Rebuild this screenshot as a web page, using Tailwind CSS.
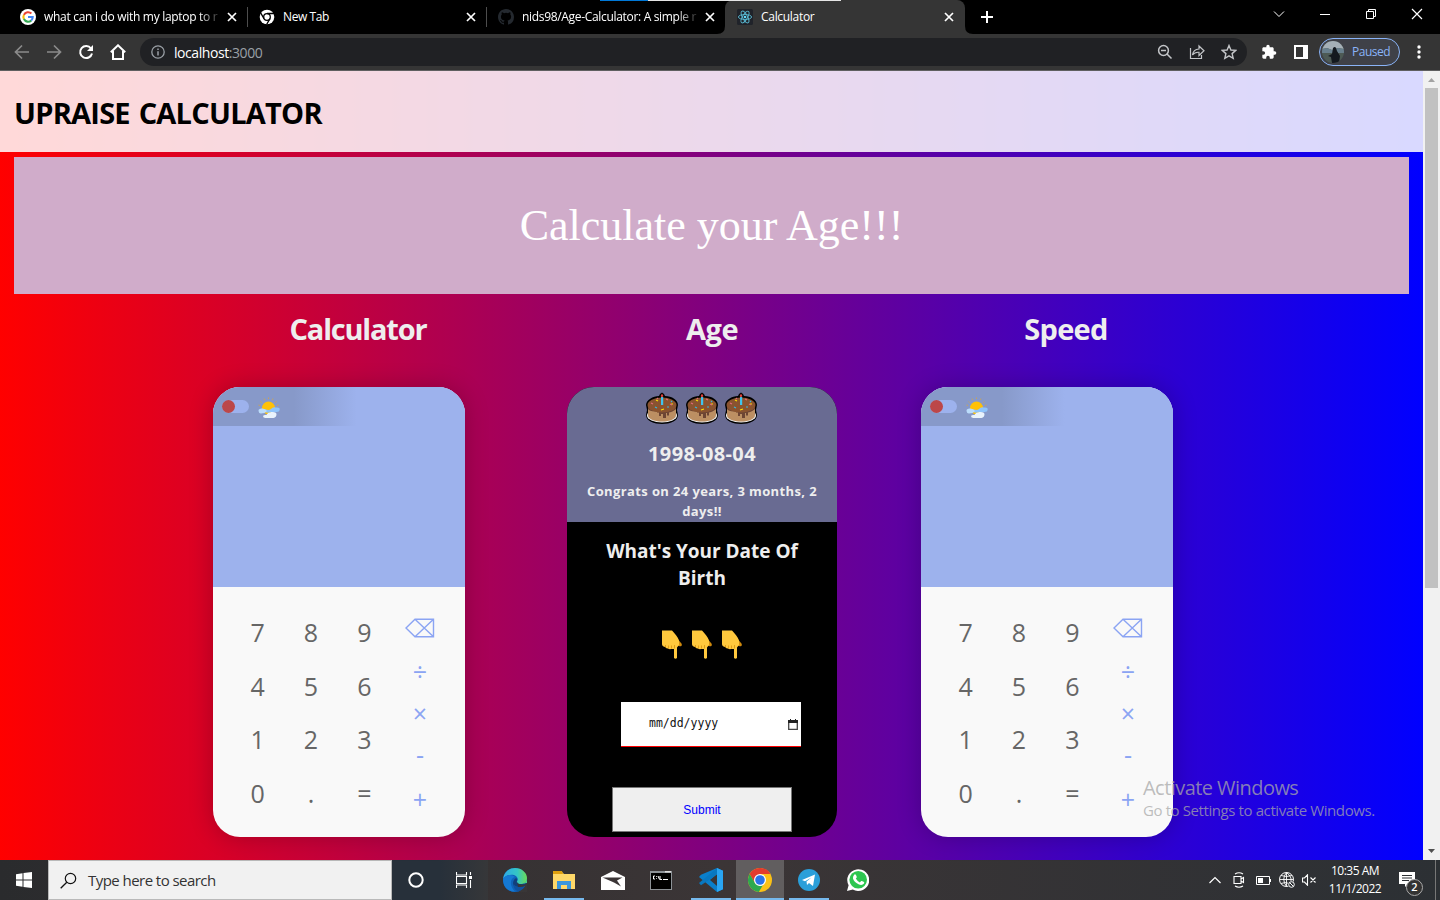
<!DOCTYPE html>
<html lang="en">
<head>
<meta charset="utf-8">
<title>Calculator</title>
<script src="https://cdn.jsdelivr.net/npm/@tailwindcss/browser@4"></script>
</head>
<body class="w-[1440px] h-[900px] overflow-hidden bg-black font-['Open_Sans','Noto_Sans',sans-serif]">
<svg class="hidden" xmlns="http://www.w3.org/2000/svg">
  <symbol id="x" viewBox="0 0 10 10"><path d="M1 1l8 8M9 1l-8 8" stroke="#fff" stroke-width="1.7" fill="none"/></symbol>
  <symbol id="cake" viewBox="0 0 34 34">
    <path d="M1 13C1 8 8 4 14 4L15 2L17 .5L19 2L20 4C27 4 33 8 33 13L32 18L33 23C33 29 25 32 17 32S1 29 1 23L2 18Z" fill="#000"/>
    <ellipse cx="17" cy="23.500" rx="15" ry="7" fill="#ececec"/>
    <path d="M3 13h28v10c0 4-6 6.500-14 6.500S3 27 3 23z" fill="#bc8f63"/>
    <path d="M3 13h28v4c-2 2-4 3-7 3.500v3h-2v-2.500h-1v5h-3v-4h-2v2h-2v-3.500h-2v-1C7 20 4 18.500 3 17z" fill="#6d4534"/>
    <ellipse cx="17" cy="13" rx="14.500" ry="7.500" fill="#8a532f"/>
    <path d="M16 5h2.200v8H16z" fill="#3fc5ee"/><path d="M17 1.500l1.400 2.500-1.400 1.500L15.600 4z" fill="#e8453c"/>
    <path d="M11 8l2 1M19 17l-3 1M26 12h2" stroke="#fce100" stroke-width="1.200"/><path d="M10 15l2 1M22 15h2M26 9l1 1" stroke="#35b9de" stroke-width="1.200"/><path d="M6 11l2 1M21 7l2 1M27 13l-2-1M12 7l1-1" stroke="#e26a7d" stroke-width="1.200"/>
  </symbol>
  <symbol id="hand" viewBox="0 0 20 29">
    <path d="M10 2l9 11c2 2 0 4-2 3l-4-1z" fill="#d08a0c"/>
    <path d="M0 0.500h10c3 3 6 7 7 10v4.500l-2 2.500v10.500q-1.500 1.500-3 0v-9H9q-1.500 .5-3-.500-2 0-2.500-1.500Q0 16.500 0 14z" fill="#ffc83d"/>
    <path d="M3.500 15v2.500M6.500 15.500v3M9.500 15.500v3M12.500 15v3.500" stroke="#d8930f" stroke-width=".8"/>
  </symbol>
  <symbol id="sun" viewBox="0 0 22 22">
    <circle cx="10.500" cy="11" r="6.500" fill="#ffc107"/>
    <path d="M10.500 .500v1.500M6 1.500l.6 1.400M15 1.500l-.6 1.400M2.500 4.500L3.600 5.600M18.500 4.500L17.400 5.600M.500 8l1.500.6M20.500 8l-1.500.6" stroke="#d9a640" stroke-width=".8"/>
    <path d="M4 14q0-2.500 4-1.500 3 1 5-.500 2-2.500 5-1.500 4-.5 3.700 2-.3 2.500-3.200 2.500h-5q-4 2-9.500-1z" fill="#8fc4fb"/>
    <path d="M0.500 13q1-2 4-1.500 3 0 4.500 2.500-2 2.500-6 2.500-2.500 0-2.500-3.500z" fill="#bbdcfb"/>
    <path d="M5 19q1-1.500 3.500-1 1-2.500 5-3 4.500-.5 5 2 0 3.500-3 4H7.500q-2.500 0-2.500-2z" fill="#e9f3fd"/>
  </symbol>
  <symbol id="backspace" viewBox="0 0 30 20"><path d="M1 10L10 1.200H28.500V18.800H10ZM10 1.200L28.500 18.800M28.500 1.200L10 18.800" fill="none" stroke="#8ba4f3" stroke-width="1.400"/></symbol>
</svg>

<div class="flex h-[900px] flex-col">
  <!-- Tab strip -->
  <div class="relative flex h-[34px] shrink-0 bg-black pl-2 text-[12px] text-white">
    <div class="flex w-[239px] items-center pl-3">
      <svg class="size-4 shrink-0" viewBox="0 0 16 16"><circle cx="8" cy="8" r="8" fill="#fff"/><g fill="none" stroke-width="2.100"><path d="M3.900 5.900A4.700 4.700 0 0 1 11.400 4.600" stroke="#ea4335"/><path d="M3.900 10.100a4.700 4.700 0 0 1 0-4.200" stroke="#fbbc05"/><path d="M11.300 11.400a4.700 4.700 0 0 1-7.400-1.300" stroke="#34a853"/><path d="M8 8h4.700a4.700 4.700 0 0 1-1.500 3.500" stroke="#4285f4"/></g></svg>
      <span class="ml-2 w-[176px] shrink-0 whitespace-nowrap tracking-[-0.3px] [mask-image:linear-gradient(to_right,black_155px,transparent_178px)]">what can i do with my laptop to r</span>
      <svg class="ml-[7px] size-[10px] shrink-0"><use href="#x"/></svg>
      <span class="-mr-px ml-[10px] h-5 w-px bg-[#4d4d4d]"></span>
    </div>
    <div class="flex w-[239px] items-center pl-3">
      <svg class="size-4 shrink-0" viewBox="0 0 16 16"><circle cx="8" cy="8" r="7.300" fill="#fff"/><circle cx="8" cy="8" r="3.300" fill="#fff" stroke="#000" stroke-width="1.300"/><path d="M8 4.500h7M5 9.700L1.500 3.700M11 9.700L7.600 15.500" stroke="#000" stroke-width="1.300"/></svg>
      <span class="ml-2 w-[176px] shrink-0 tracking-[-0.4px]">New Tab</span>
      <svg class="ml-[7px] size-[10px] shrink-0"><use href="#x"/></svg>
      <span class="-mr-px ml-[10px] h-5 w-px bg-[#4d4d4d]"></span>
    </div>
    <div class="flex w-[239px] items-center pl-3">
      <svg class="size-4 shrink-0" viewBox="0 0 16 16"><path fill="#24292f" d="M8 0C3.580 0 0 3.580 0 8c0 3.540 2.290 6.530 5.470 7.590.4.070.550-.170.550-.380v-1.490c-2.010.370-2.530-.490-2.690-.940-.090-.230-.480-.940-.820-1.130-.280-.150-.680-.520-.010-.530.630-.010 1.080.580 1.230.820.720 1.210 1.870.870 2.330.660.070-.520.280-.870.510-1.070-1.780-.200-3.640-.890-3.640-3.950 0-.870.310-1.590.820-2.150-.080-.200-.360-1.020.080-2.120 0 0 .670-.210 2.200.820a7.600 7.600 0 0 1 4 0c1.530-1.040 2.200-.820 2.200-.820.440 1.100.160 1.920.080 2.120.510.560.820 1.270.820 2.150 0 3.070-1.870 3.750-3.650 3.950.290.250.540.730.540 1.480v2.200c0 .210.150.460.550.380A8 8 0 0 0 16 8c0-4.420-3.580-8-8-8z"/></svg>
      <span class="ml-2 w-[176px] shrink-0 whitespace-nowrap tracking-[-0.32px] [mask-image:linear-gradient(to_right,black_155px,transparent_178px)]">nids98/Age-Calculator: A simple r</span>
      <svg class="ml-[7px] size-[10px] shrink-0"><use href="#x"/></svg>
    </div>
    <div class="flex w-[240px] items-center rounded-t-lg bg-[#353535] pl-3">
      <svg class="size-4 shrink-0" viewBox="0 0 16 16"><rect width="16" height="16" rx="1.500" fill="#20232a"/><g fill="none" stroke="#58b8d0" stroke-width=".9"><ellipse cx="8" cy="8" rx="6.600" ry="2.500"/><ellipse cx="8" cy="8" rx="6.600" ry="2.500" transform="rotate(60 8 8)"/><ellipse cx="8" cy="8" rx="6.600" ry="2.500" transform="rotate(120 8 8)"/></g><circle cx="8" cy="8" r="1.300" fill="#61dafb"/></svg>
      <span class="ml-2 w-[176px] shrink-0 tracking-[-0.3px]">Calculator</span>
      <svg class="ml-[7px] size-[10px] shrink-0"><use href="#x"/></svg>
    </div>
    <svg class="ml-[16px] mt-[11px] size-3" viewBox="0 0 12 12"><path d="M6 0v12M0 6h12" stroke="#fff" stroke-width="2"/></svg>
    <svg class="absolute left-[717px] bottom-0 h-2 w-[256px]" viewBox="0 0 256 8"><path d="M0 8Q8 8 8 0V8ZM256 8Q248 8 248 0V8Z" fill="#353535"/></svg>
    <div class="absolute left-[600px] top-0 flex h-px w-[241px] bg-[#e6e6e6]"><span class="w-12 bg-[#0078d7]"></span></div>
    <div class="ml-auto mr-[17px] mt-[8px] flex gap-[34px]">
      <svg class="size-3" viewBox="0 0 12 12"><path d="M1 3.500L6 8.500L11 3.500" fill="none" stroke="#fff"/></svg>
      <svg class="size-3" viewBox="0 0 12 12"><path d="M1 6.500h10" stroke="#fff"/></svg>
      <svg class="size-3" viewBox="0 0 12 12"><path d="M1.500 3.500h7v7h-7zM3.500 3.500v-2h7v7h-2" fill="none" stroke="#fff"/></svg>
      <svg class="size-3" viewBox="0 0 12 12"><path d="M1 1l10 10M11 1L1 11" stroke="#fff" stroke-width="1.200"/></svg>
    </div>
  </div>

  <!-- Toolbar -->
  <div class="flex h-[37px] shrink-0 items-center border-b border-[#5f5f60] bg-[#353535] pl-[14px]">
    <div class="flex gap-4">
      <svg class="size-4" viewBox="0 0 16 16"><path d="M15 8H2M8 1.500L1.500 8L8 14.500" fill="none" stroke="#8b8b8b" stroke-width="1.700"/></svg>
      <svg class="size-4" viewBox="0 0 16 16"><path d="M1 8h13M8 1.500L14.500 8L8 14.500" fill="none" stroke="#8b8b8b" stroke-width="1.700"/></svg>
      <svg class="size-4" viewBox="0 0 16 16"><path d="M13 4.500A6 6 0 1 0 14 9.500" fill="none" stroke="#fff" stroke-width="2"/><path d="M15 1v6H9z" fill="#fff"/></svg>
      <svg class="size-4" viewBox="0 0 16 16"><path d="M.800 8.200L8 1.300L15.200 8.200M3 7v8h10V7" fill="none" stroke="#fff" stroke-width="2"/></svg>
    </div>
    <div class="ml-[14px] flex h-7 w-[1107px] items-center rounded-full bg-[#202124] pl-[11px] pr-[10px]">
      <svg class="size-[14px]" viewBox="0 0 14 14"><circle cx="7" cy="7" r="6.200" fill="none" stroke="#9aa0a6" stroke-width="1.300"/><path d="M7 6.200v4.300M7 3.500v1.500" stroke="#9aa0a6" stroke-width="1.500"/></svg>
      <span class="ml-[9px] text-[14px] tracking-[-0.43px] text-white">localhost<span class="text-[#9aa0a6]">:3000</span></span>
      <div class="ml-auto flex items-center gap-4">
        <svg class="size-4" viewBox="0 0 16 16"><circle cx="6.500" cy="6.500" r="4.900" fill="none" stroke="#c3c5c8" stroke-width="1.500"/><path d="M4 6.500h5M10 10l4.500 4.500" stroke="#c3c5c8" stroke-width="1.500"/></svg>
        <svg class="size-4" viewBox="0 0 16 16"><path d="M1.500 4v10.500h11V11M3.500 11C4 7.500 6.500 5.200 10 5V2l5 4.800L10 11.500V8.300C7 8 5 9 3.500 11z" fill="none" stroke="#c3c5c8" stroke-width="1.200"/></svg>
        <svg class="size-4" viewBox="0 0 16 16"><path d="M8 1.500l1.900 4.500 4.900.4-3.700 3.200 1.100 4.800L8 11.900l-4.200 2.500 1.100-4.800L1.200 6.400l4.900-.4z" fill="none" stroke="#c3c5c8" stroke-width="1.400"/></svg>
      </div>
    </div>
    <svg class="ml-[14px] size-4" viewBox="0 0 24 24"><path fill="#fff" d="M20.500 11H19V7c0-1.100-.9-2-2-2h-4V3.500a2.500 2.500 0 0 0-5 0V5H4c-1.100 0-2 .9-2 2v3.800h1.500a2.700 2.700 0 0 1 0 5.400H2V20c0 1.100.9 2 2 2h3.800v-1.500a2.700 2.700 0 0 1 5.400 0V22H17c1.100 0 2-.9 2-2v-4h1.500a2.500 2.500 0 0 0 0-5z"/></svg>
    <svg class="ml-[17px] size-[14px]" viewBox="0 0 14 14"><path d="M0 0h14v14H0zM2 2v10h7V2z" fill="#fff" fill-rule="evenodd"/></svg>
    <div class="ml-[11px] flex h-7 w-[81px] items-center rounded-full border border-[#8ab4f8] bg-[#3f4148] pl-0.5">
      <svg class="size-[22px] shrink-0" viewBox="0 0 22 22"><defs><clipPath id="av"><circle cx="11" cy="11" r="11"/></clipPath></defs><g clip-path="url(#av)"><path d="M0 0h22v22H0z" fill="#4d5a55"/><path d="M0 0h22v8l-6-1-6 2-5-2-5 1z" fill="#a5b0b7"/><path d="M0 8l5-1 5 2 6-2 6 1v4H0z" fill="#687f8d"/><path d="M11 7q2-2 3 0l1 3 3 5-1 7h-7l-1-6-3-1 4-2z" fill="#14191f"/></g></svg>
      <span class="ml-2 text-[12px] tracking-[-0.5px] text-[#8ab4f8]">Paused</span>
    </div>
    <svg class="ml-[17px] h-[14px] w-1" viewBox="0 0 4 14" fill="#fff"><circle cx="2" cy="2" r="1.700"/><circle cx="2" cy="7" r="1.700"/><circle cx="2" cy="12" r="1.700"/></svg>
  </div>

  <!-- Page -->
  <div class="relative flex h-[789px] shrink-0">
    <main class="w-[1423px] bg-linear-to-r/srgb from-[#f00] to-[#00f]">
      <header class="flex h-[81px] items-center bg-white/85 pl-[14px]"><h1 class="mt-[3px] text-[29px] font-bold tracking-[-0.75px] [word-spacing:2px] text-black">UPRAISE CALCULATOR</h1></header>
      <div class="mx-[14px] mt-[5px] flex h-[137px] items-center justify-center bg-[#d0acca] font-['Liberation_Serif',serif] text-[44px] text-white">Calculate your Age!!!</div>
      <div class="ml-[181px] grid w-[1062px] grid-cols-3">
        <section>
          <h2 class="mt-[14px] h-[43px] text-center text-[29px] font-bold leading-[42px] tracking-[-1.2px] text-[#eee]">Calculator</h2>
          <div class="ml-8 mt-9 h-[450px] w-[252px] overflow-hidden rounded-[27px] bg-[#f9f9f9] shadow-[0_0_25px_rgba(0,0,0,0.22)]">
            <div class="h-[200px] bg-[#9db2ed]">
              <div class="flex h-[39px] items-center bg-linear-to-r/srgb from-[#8799c9] from-32% to-[#9db2ed] to-57% pl-[9px]">
                <span class="flex h-[13px] w-[27px] rounded-full bg-[#9db2ed]"><i class="size-[13px] rounded-full bg-[#bc4749]"></i></span>
                <svg class="ml-[9px] mt-0.5 size-[22px]"><use href="#sun"/></svg>
              </div>
            </div>
            <div class="flex pl-[18px] pt-[19px] text-[25px] text-[#666]">
              <div class="grid w-[160px] grid-cols-3 auto-rows-[53.500px] place-items-center"><b class="font-normal">7</b><b class="font-normal">8</b><b class="font-normal">9</b><b class="font-normal">4</b><b class="font-normal">5</b><b class="font-normal">6</b><b class="font-normal">1</b><b class="font-normal">2</b><b class="font-normal">3</b><b class="font-normal">0</b><b class="font-normal">.</b><b class="font-normal">=</b></div>
              <div class="flex w-[58px] flex-col items-center pt-3 leading-[43px] text-[#8ba4f3]"><svg class="mb-[12px] h-5 w-[30px]"><use href="#backspace"/></svg><span class="h-[42px]">÷</span><span class="h-[41px]">×</span><span class="h-[45px]">-</span><span>+</span></div>
            </div>
          </div>
        </section>
        <section>
          <h2 class="mt-[14px] h-[43px] text-center text-[29px] font-bold leading-[42px] tracking-[-0.5px] text-[#eee]">Age</h2>
          <div class="ml-8 mt-9 flex h-[450px] w-[270px] flex-col items-center overflow-hidden rounded-[27px] bg-black text-center font-bold text-[#eee]">
            <div class="h-[135px] w-full shrink-0 bg-[#696b92]">
              <div class="flex justify-center gap-[5.500px] pt-[5px] pr-px"><svg class="size-[34px]"><use href="#cake"/></svg><svg class="size-[34px]"><use href="#cake"/></svg><svg class="size-[34px]"><use href="#cake"/></svg></div>
              <p class="mt-[14px] text-[20px] leading-[28px] tracking-[0.35px]">1998-08-04</p>
              <p class="mt-[13px] text-[13px] leading-5 tracking-[0.38px]">Congrats on 24 years, 3 months, 2<br>days!!</p>
            </div>
            <p class="mt-[16px] text-[19px] leading-[27px] tracking-[-0.02px]">What's Your Date Of<br>Birth</p>
            <div class="mt-[38px] flex gap-[10px]"><svg class="h-[29px] w-5"><use href="#hand"/></svg><svg class="h-[29px] w-5"><use href="#hand"/></svg><svg class="h-[29px] w-5"><use href="#hand"/></svg></div>
            <div class="ml-[18px] mt-[43px] flex h-[45px] w-[180px] shrink-0 items-center border-b border-[#f00] bg-white pl-7 pr-[3px] font-['DejaVu_Sans_Mono',monospace] text-[11.500px] font-normal text-[#111]">mm/dd/yyyy<svg class="ml-auto h-[11px] w-[10px]" viewBox="0 0 10 11"><path d="M.700 2h8.600v8.300H.700z" fill="none" stroke="#444" stroke-width="1.300"/><path d="M0 1h10v3H0zM2 0h1v2H2zM7 0h1v2H7z" fill="#222"/></svg></div>
            <button class="mt-10 h-[45px] w-[180px] shrink-0 border border-[#767676] bg-[#efefef] font-['Liberation_Sans',sans-serif] text-[12px] font-normal text-[#00f]">Submit</button>
          </div>
        </section>
        <section>
          <h2 class="mt-[14px] h-[43px] text-center text-[29px] font-bold leading-[42px] tracking-[-0.7px] text-[#eee]">Speed</h2>
          <div class="ml-8 mt-9 h-[450px] w-[252px] overflow-hidden rounded-[27px] bg-[#f9f9f9] shadow-[0_0_25px_rgba(0,0,0,0.22)]">
            <div class="h-[200px] bg-[#9db2ed]">
              <div class="flex h-[39px] items-center bg-linear-to-r/srgb from-[#8799c9] from-32% to-[#9db2ed] to-57% pl-[9px]">
                <span class="flex h-[13px] w-[27px] rounded-full bg-[#9db2ed]"><i class="size-[13px] rounded-full bg-[#bc4749]"></i></span>
                <svg class="ml-[9px] mt-0.5 size-[22px]"><use href="#sun"/></svg>
              </div>
            </div>
            <div class="flex pl-[18px] pt-[19px] text-[25px] text-[#666]">
              <div class="grid w-[160px] grid-cols-3 auto-rows-[53.500px] place-items-center"><b class="font-normal">7</b><b class="font-normal">8</b><b class="font-normal">9</b><b class="font-normal">4</b><b class="font-normal">5</b><b class="font-normal">6</b><b class="font-normal">1</b><b class="font-normal">2</b><b class="font-normal">3</b><b class="font-normal">0</b><b class="font-normal">.</b><b class="font-normal">=</b></div>
              <div class="flex w-[58px] flex-col items-center pt-3 leading-[43px] text-[#8ba4f3]"><svg class="mb-[12px] h-5 w-[30px]"><use href="#backspace"/></svg><span class="h-[42px]">÷</span><span class="h-[41px]">×</span><span class="h-[45px]">-</span><span>+</span></div>
            </div>
          </div>
        </section>
      </div>
    </main>
    <div class="flex w-[17px] flex-col items-center justify-between bg-[#f1f1f1] pt-[7px] pb-[7px]">
      <div><svg class="h-1 w-[7px]" viewBox="0 0 7 4"><path d="M0 4L3.500 0L7 4z" fill="#a3a3a3"/></svg></div>
      <div class="mb-auto mt-[6px] h-[500px] w-[13px] bg-[#c1c1c1]"></div>
      <svg class="h-1 w-[7px]" viewBox="0 0 7 4"><path d="M0 0L3.500 4L7 0z" fill="#505050"/></svg>
    </div>
    <div class="absolute left-[1143px] top-[703px] whitespace-nowrap text-[#a8a8a8]/75">
      <p class="text-[20px] leading-[27px] tracking-[-0.55px]">Activate Windows</p>
      <p class="text-[15px] leading-[18px] tracking-[-0.4px]">Go to Settings to activate Windows.</p>
    </div>
  </div>

  <!-- Taskbar -->
  <div class="flex h-10 shrink-0 items-center bg-linear-to-r/srgb from-[#2a2b2d] via-[#3b3536] to-[#2c3034] text-white">
    <div class="flex w-12 justify-center"><svg class="size-4" viewBox="0 0 16 16"><path d="M0 2.200L6.500 1.300V7.500H0zM7.500 1.100L16 0V7.500H7.500zM0 8.500H6.500V14.700L0 13.800zM7.500 8.500H16V16L7.500 14.900z" fill="#fff"/></svg></div>
    <div class="flex h-10 w-[344px] items-center border border-[#b9b9b9] bg-[#f1f1f1] pl-[11px] text-[15px] tracking-[-0.55px] text-[#333]">
      <svg class="size-[17px]" viewBox="0 0 17 17"><circle cx="10.500" cy="6.500" r="5.200" fill="none" stroke="#111" stroke-width="1.200"/><path d="M6.800 10.200L.700 16.300" stroke="#111" stroke-width="1.300"/></svg>
      <span class="ml-[11px]">Type here to search</span>
    </div>
    <div class="flex h-10 w-12 items-center justify-center bg-[#27303a]"><svg class="size-4" viewBox="0 0 16 16"><circle cx="8" cy="8" r="6.700" fill="none" stroke="#fff" stroke-width="2"/></svg></div>
    <div class="flex h-10 w-12 items-center justify-center bg-linear-to-r from-[#27303a] to-[#363739]"><svg class="size-4" viewBox="0 0 16 16"><path d="M.500 0v3h10V0M.500 16v-3h10v3M.500 4.500h10v7H.500zM14.500 0v3M14.500 8v8" fill="none" stroke="#fff" stroke-width="1.100"/><path d="M13 4h3v3h-3z" fill="#fff"/></svg></div>
    <div class="flex h-10 w-[54px] items-center justify-center"><svg class="size-6" viewBox="0 0 24 24"><defs><linearGradient id="e1" x1="0" x2="1"><stop stop-color="#2fa9e8"/><stop offset=".6" stop-color="#34c6c4"/><stop offset="1" stop-color="#6bdc55"/></linearGradient></defs><circle cx="12" cy="12" r="12" fill="#0f62b8"/><path d="M0 11C1 4 6 0 12 0c7 0 12 5 12 10 0 4-3 6-6 6s-5-1-4-3c2-2 0-5-3-6C6 6 2 8 0 11z" fill="url(#e1)"/><path d="M0 11C3 6 9 6 12 9c-5 1-6 9 0 14.500C5 24 0 19 0 11z" fill="#1579d4"/><path d="M13 10c2 1 1 3 1 4 0 2 4 3 9 1q1 0 .500 1-3 6-8 5c-5-1-8-7-2.500-11z" fill="#113f7c"/><path d="M13.500 13c0 2.500 4 4 9.500 2l1 0V9q0 7-6 7-4 0-4.500-3z" fill="#4dcf86"/><path d="M14 13.500q1 3.500 6 3.200 3-.2 4-1.700v9h-8z" fill="#393637"/><path d="M15.500 23.500Q20 22 22.500 17.500q-3 2-7 1.500-4-.800-5-3 0 6 5 7.500z" fill="#10529f"/></svg></div>
    <div class="relative flex h-10 w-[44px] items-center justify-center"><svg class="h-[19px] w-[22px]" viewBox="0 0 22 19"><path d="M0 1h9l2 2h11v15H0z" fill="#ffd869"/><path d="M0 0h9l1 3H0z" fill="#e0a00f"/><path d="M4 18v-8h14v8h-4v-4H8v4z" fill="#3a96dd"/></svg><span class="absolute bottom-0 left-0.5 h-0.5 w-10 bg-[#76b9ed]"></span></div>
    <div class="flex h-10 w-[54px] items-center justify-center"><svg class="h-[19px] w-6" viewBox="0 0 24 19"><path d="M0 6L12 0l12 6v13H0z" fill="#fff"/><path d="M1.500 6.500h20L16 9.500l4 6-7-4z" fill="#3b3536"/></svg></div>
    <div class="flex h-10 w-[43px] items-center justify-center pr-px"><svg class="h-[19px] w-[22px]" viewBox="0 0 22 19"><path d="M0 0h22v19H0z" fill="#8d9297"/><path d="M1 2h20v16H1z" fill="#000"/><path d="M15 0h6v1.500h-6z" fill="#ddd"/><path d="M5 5H3.500v3H5M6.500 5v.8M6.500 7.300V8M8 5l1.500 3.500M10 5v3.500h2M13 8.500h5" stroke="#fff" fill="none"/></svg></div>
    <div class="relative flex h-10 w-[53px] items-center justify-center pl-[3px]"><svg class="size-6" viewBox="0 0 24 24"><path d="M18 0l6 2.800v18.400L18 24 0 9l2-2.300z" fill="#0a7fcb"/><path d="M18 6v12L11 12z" fill="#393536"/><path d="M0 15L18 0v6.500L2 17.300z" fill="#0878c1"/><path d="M18 0l6 2.800v18.400L18 24z" fill="#2aa5f2"/></svg><span class="absolute bottom-0 left-2 h-0.5 w-10 bg-[#76b9ed]"></span></div>
    <div class="flex h-10 w-12 items-center justify-center border-b-2 border-[#76b9ed] bg-[#615e5f] pt-0.5"><svg class="size-6" viewBox="0 0 24 24"><circle cx="12" cy="12" r="12" fill="#fbc116"/><path d="M1.600 6A12 12 0 0 1 22.400 6H12L7 15z" fill="#e33b2e"/><path d="M1.600 6L7 15l5 3 3-1-4.200 7A12 12 0 0 1 1.600 6z" fill="#2da94f"/><circle cx="12" cy="12" r="6" fill="#fff"/><circle cx="12" cy="12" r="4.800" fill="#2b73e8"/></svg></div>
    <div class="relative flex h-10 w-[50px] items-center justify-center"><svg class="size-[22px]" viewBox="0 0 22 22"><circle cx="11" cy="11" r="11" fill="#2a9fd9"/><path d="M4 11L17 5.500L15 17l-4-3-2 2-.5-3.500 5-4-6.500 3.800z" fill="#fff"/></svg><span class="absolute bottom-0 left-[5px] h-0.5 w-10 bg-[#76b9ed]"></span></div>
    <div class="flex h-10 w-12 items-center justify-center"><svg class="size-[22px]" viewBox="0 0 22 22"><path d="M0 22l1.600-5.700A11 10.800 0 1 1 5.800 20.500z" fill="#fff"/><circle cx="11.200" cy="10.800" r="8.800" fill="#2cc64f"/><path d="M7 6q1-1.500 2 0l.8 2q0 .8-1 1.600 1.500 2.700 4 3.800l1.400-1.400q.6-.4 2.400.8 1.200.6.400 1.800-2 2.500-5.500.7Q7 13 6 9.500 5.700 7.500 7 6z" fill="#fff"/></svg></div>
    <div class="ml-auto flex items-center">
      <svg class="h-2 w-3" viewBox="0 0 12 8"><path d="M.500 7L6 1.500L11.500 7" fill="none" stroke="#fff" stroke-width="1.200"/></svg>
      <svg class="ml-3 h-4 w-3" viewBox="0 0 12 16"><path d="M1 4.500h7v7H1zM8 7l2.500-1.500v5L8 9M2 2Q6-.5 10 2M2 14q4 2.500 8 0" fill="none" stroke="#fff" stroke-width="1.100"/></svg>
      <svg class="ml-[11px] h-[9px] w-[15px]" viewBox="0 0 15 9"><path d="M.500.500h13v8H.500zM14.500 3v3" fill="none" stroke="#fff"/><path d="M2 2h5v5H2z" fill="#fff"/></svg>
      <svg class="ml-2 size-4" viewBox="0 0 16 16"><circle cx="7.500" cy="7.500" r="7" fill="none" stroke="#fff"/><path d="M7.500.500v14M.500 7.500h14M2 3.500q5.500 2 11 0M2 11.500q5-2 8 0M7.500.500Q2 7 7.500 14.500M7.500.500Q13 5 12 9" fill="none" stroke="#fff" stroke-width=".9"/><circle cx="12.500" cy="12.500" r="3.500" fill="#2c3034"/><circle cx="12.500" cy="12.500" r="2.800" fill="none" stroke="#fff"/><path d="M10.500 10.500l4 4" stroke="#fff"/></svg>
      <svg class="ml-[7px] h-3 w-[15px]" viewBox="0 0 15 12"><path d="M.500 4h2L5.500.800v10.400L2.500 8h-2zM8.500 3.500l5 5M13.500 3.500l-5 5" fill="none" stroke="#fff" stroke-width="1.100"/></svg>
      <div class="ml-[8px] w-[60px] whitespace-nowrap text-center text-[12px] leading-[18px] tracking-[-0.5px]">10:35 AM<br>11/1/2022</div>
      <div class="relative ml-[14px] size-6 h-4"><svg class="h-[15px] w-4" viewBox="0 0 16 15"><path d="M0 0h16v12H9l-3 3v-3H0z" fill="#fff"/><path d="M3 3.500h10M3 6h10M3 8.500h7" stroke="#2c3034"/></svg><span class="absolute left-[7px] top-[7px] flex size-[17px] items-center justify-center rounded-full border border-[#aaa] bg-[#333] text-[11px] font-semibold">2</span></div>
      <span class="ml-3 mr-1 h-10 w-px bg-[#777]"></span>
    </div>
  </div>
</div>
</body>
</html>
